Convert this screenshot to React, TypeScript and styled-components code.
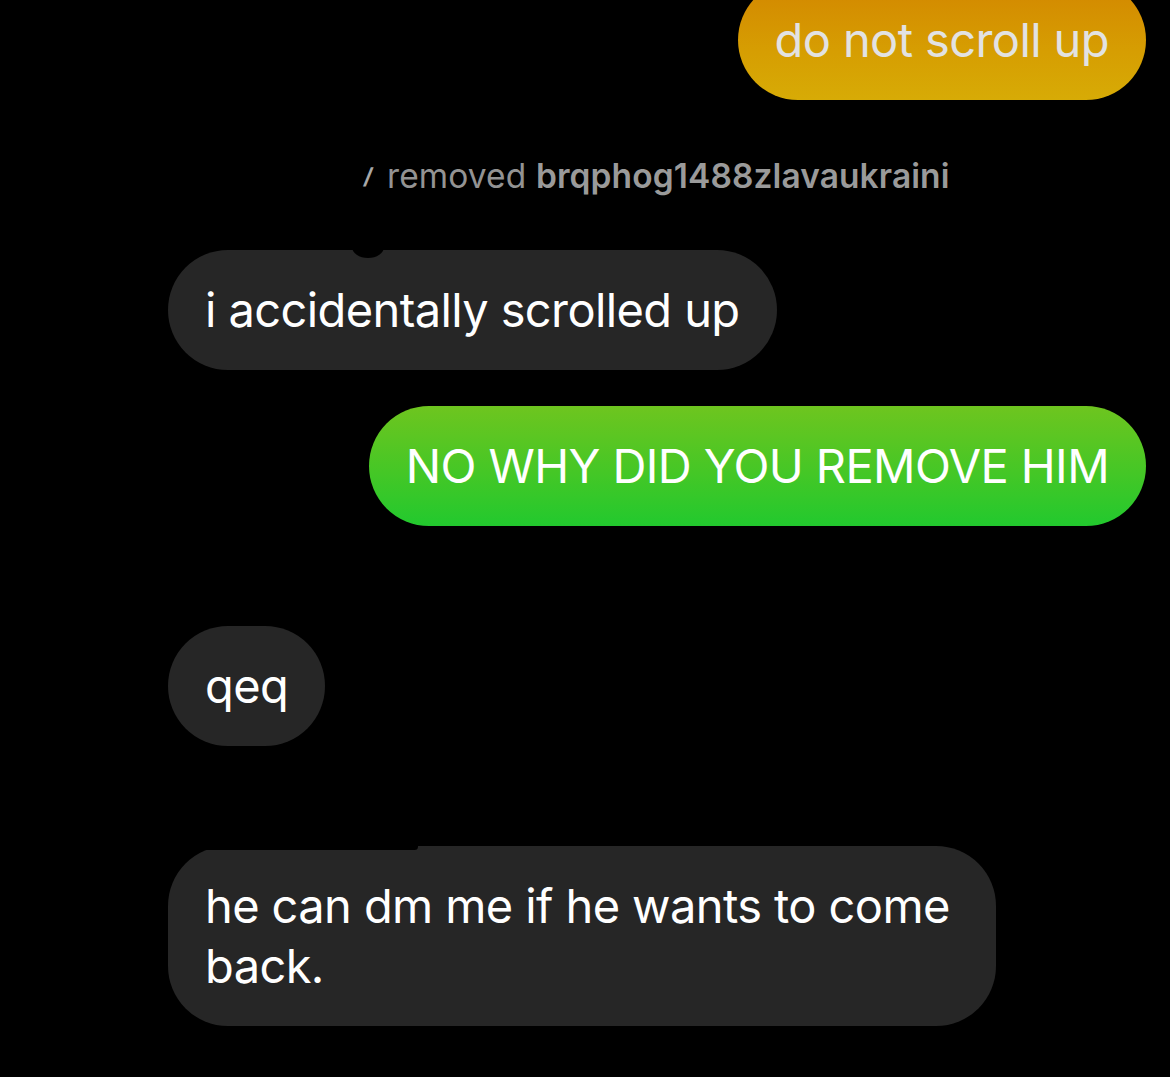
import React from "react";
import styled, { createGlobalStyle, css } from "styled-components";

const Global = createGlobalStyle`
  html, body { margin: 0; padding: 0; background: #000; }
  body { overflow: hidden; font-family: Inter, "Noto Sans", sans-serif; }
`;

const Thread = styled.div`
  width: 1170px;
  height: 1077px;
  background: #000;
  display: flex;
  flex-direction: column;
  padding: 0 24px 0 168px;
  box-sizing: border-box;
  overflow: hidden;
`;

const Row = styled.div<{ $side: "left" | "right" | "center"; $top: number }>`
  display: flex;
  margin-top: ${(p) => p.$top}px;
  justify-content: ${(p) =>
    p.$side === "left" ? "flex-start" : p.$side === "right" ? "flex-end" : "center"};
`;

type Tone = "orange" | "green" | "grey";

const tones = {
  orange: css`
    background: linear-gradient(180deg, #d38600 0%, #d69e02 60%, #d7ab06 100%);
    color: #e2e2e2;
  `,
  green: css`
    background: linear-gradient(180deg, #6ec51f 0%, #45c726 55%, #22c92e 100%);
    color: #ffffff;
  `,
  grey: css`
    background: #262626;
    color: #ffffff;
  `,
};

const Bubble = styled.div<{ $tone: Tone }>`
  position: relative;
  box-sizing: border-box;
  max-width: 828px;
  padding: 30px 37px;
  border-radius: 60px;
  font-size: 47px;
  line-height: 60px;
  letter-spacing: -0.6px;
  font-weight: 400;
  ${(p) => tones[p.$tone]}
`;

const Notch = styled.span`
  position: absolute;
  top: -14px;
  left: 184px;
  width: 32px;
  height: 22px;
  border-radius: 50%;
  background: #000;
`;

const Scribble = styled.span`
  position: absolute;
  top: -3px;
  left: 30px;
  width: 220px;
  height: 7px;
  border-radius: 4px;
  background: #000;
`;

const SystemLine = styled.div`
  display: flex;
  align-items: center;
  white-space: pre;
  height: 40px;
  font-size: 33.5px;
  line-height: 40px;
  color: #939393;
  letter-spacing: 0.1px;
`;

const Cut = styled.span`
  font-size: 22px;
  font-weight: 700;
  line-height: 40px;
  transform: skewX(-8deg);
  margin-right: 14px;
  color: #a8a8a8;
`;

const Name = styled.b`
  font-weight: 600;
  color: #9a9a9a;
`;

export default function App() {
  return (
    <>
      <Global />
      <Thread>
        <Row $side="right" $top={-20}>
          <Bubble $tone="orange">do not scroll up</Bubble>
        </Row>
        <Row $side="center" $top={56}>
          <SystemLine>
            <Cut>/</Cut>removed <Name>brqphog1488zlavaukraini</Name>
          </SystemLine>
        </Row>
        <Row $side="left" $top={54}>
          <Bubble $tone="grey">
            <Notch />i accidentally scrolled up
          </Bubble>
        </Row>
        <Row $side="right" $top={36}>
          <Bubble $tone="green">NO WHY DID YOU REMOVE HIM</Bubble>
        </Row>
        <Row $side="left" $top={100}>
          <Bubble $tone="grey">qeq</Bubble>
        </Row>
        <Row $side="left" $top={100}>
          <Bubble $tone="grey">
            <Scribble />he can dm me if he wants to come back.
          </Bubble>
        </Row>
      </Thread>
    </>
  );
}
